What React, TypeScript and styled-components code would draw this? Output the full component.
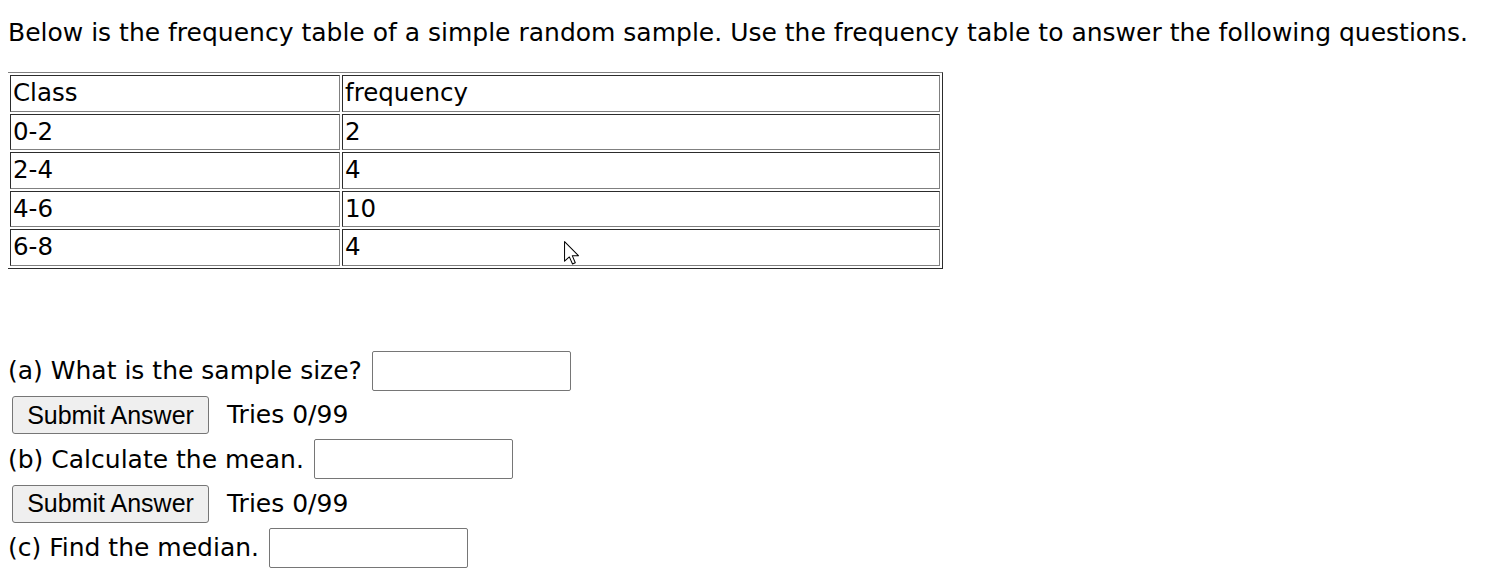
import React from "react";
import styled, { createGlobalStyle } from "styled-components";

const GlobalStyle = createGlobalStyle`
  body {
    margin: 8px;
    background: #ffffff;
    color: #000000;
    font-family: "DejaVu Sans", Verdana, sans-serif;
    font-size: 25px;
  }
`;

const rows: [string, string][] = [
  ["0-2", "2"],
  ["2-4", "4"],
  ["4-6", "10"],
  ["6-8", "4"],
];

const questions = [
  { label: "(a) What is the sample size?", submit: true },
  { label: "(b) Calculate the mean.", submit: true },
  { label: "(c) Find the median.", submit: false },
];

export default function App(): JSX.Element {
  return (
    <Page>
      <GlobalStyle />
      <Intro>
        Below is the frequency table of a simple random sample. Use the frequency table to answer the
        following questions.
      </Intro>
      <FreqTable>
        <tbody>
          <tr>
            <ClassCell>Class</ClassCell>
            <FreqCell>frequency</FreqCell>
          </tr>
          {rows.map(([c, f]) => (
            <tr key={c}>
              <ClassCell>{c}</ClassCell>
              <FreqCell>{f}</FreqCell>
            </tr>
          ))}
        </tbody>
      </FreqTable>
      <Questions>
        {questions.map((q) => (
          <React.Fragment key={q.label}>
            <QuestionRow>
              <span>{q.label}</span>
              <AnswerInput type="text" />
            </QuestionRow>
            {q.submit && (
              <SubmitRow>
                <SubmitButton type="button">Submit Answer</SubmitButton>
                <Tries>Tries 0/99</Tries>
              </SubmitRow>
            )}
          </React.Fragment>
        ))}
      </Questions>
      <Cursor viewBox="0 0 12 19" width="17" height="24">
        <path
          d="M0.5 0.5 L0.5 16 L4.3 12.6 L6.8 18.2 L9 17.2 L6.6 11.6 L11.5 11.6 Z"
          fill="#ffffff"
          stroke="#000000"
          strokeWidth="0.8"
          strokeLinejoin="round"
        />
      </Cursor>
    </Page>
  );
}

const Page = styled.div`
  position: relative;
  padding-top: 10px;
`;

const Intro = styled.p`
  margin: 0;
  line-height: 29px;
  white-space: nowrap;
`;

const FreqTable = styled.table`
  margin: 25px 0 0 -1px;
  width: 936px;
  border: 1px outset #808080;
  border-spacing: 2px;
  border-collapse: separate;
  font-size: 24.5px;
`;

const Cell = styled.td`
  border: 1px inset #808080;
  padding: 1px 2px;
  height: 36.6px;
  line-height: 32.6px;
  vertical-align: middle;
  box-sizing: border-box;
`;

const ClassCell = styled(Cell)`
  width: 330px;
`;

const FreqCell = styled(Cell)``;

const Questions = styled.div`
  margin-top: 82px;
  display: flex;
  flex-direction: column;
  align-items: flex-start;
  gap: 5.25px;
`;

const QuestionRow = styled.div`
  display: flex;
  align-items: center;
  gap: 10px;
  height: 40px;
`;

const AnswerInput = styled.input`
  width: 199px;
  height: 40px;
  box-sizing: border-box;
  border: 1px solid #767676;
  border-radius: 2px;
  padding: 2px 4px;
  font: inherit;
  background: #ffffff;
`;

const SubmitRow = styled.div`
  display: flex;
  align-items: center;
  gap: 18px;
  padding-left: 4px;
  height: 38px;
`;

const SubmitButton = styled.button`
  height: 38px;
  width: 197px;
  box-sizing: border-box;
  padding: 0;
  border: 1px solid #767676;
  border-radius: 3px;
  background: #efefef;
  color: #000000;
  font-family: "Liberation Sans", Arial, sans-serif;
  font-size: 25px;
`;

const Tries = styled.span`
  line-height: 30px;
`;

const Cursor = styled.svg`
  position: absolute;
  left: 555px;
  top: 233px;
`;
